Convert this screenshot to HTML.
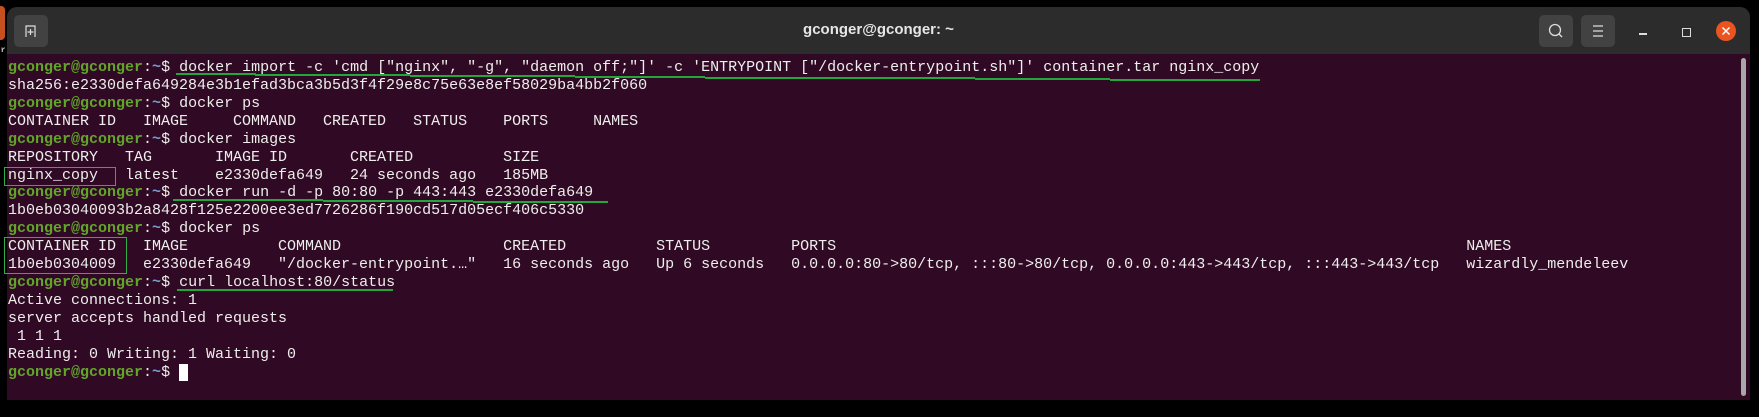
<!DOCTYPE html>
<html><head><meta charset="utf-8"><style>
html,body{margin:0;padding:0;background:#000;width:1759px;height:417px;overflow:hidden;position:relative}
.win{position:absolute;left:7px;top:7px;width:1743px;height:393px;background:#300a24;border-radius:10px 10px 0 0;overflow:hidden}
.tb{position:absolute;left:0;top:0;width:100%;height:47px;background:#2c2c2c}
.title{position:absolute;left:0;width:100%;top:14px;text-align:center;font:bold 15px "Liberation Sans",sans-serif;color:#e6e6e6}
.btn{position:absolute;top:8px;width:34px;height:32px;background:#424242;border-radius:5px}
pre{position:absolute;left:8px;top:59px;margin:0;font:15px/17.92px "Liberation Mono",monospace;color:#eeeeec;white-space:pre}
.g{color:#62a52a;font-weight:bold}.b{color:#729fcf;font-weight:bold}
.u{position:absolute;height:2px;background:#22a83a}
.box{position:absolute;border:1px solid #2fae47}
</style></head><body>
<div style="position:absolute;left:0;top:6px;width:5px;height:34px;background:#c8501e;border-radius:0 4px 4px 0"></div>
<div style="position:absolute;left:0;top:44px;width:5px;height:8px;color:#ccc;font:12px 'Liberation Mono';overflow:hidden">r</div>
<div class="win">
<div class="tb">
<div class="btn" style="left:7px"><svg width="34" height="32"><path d="M12 22V11h9v11" fill="none" stroke="#ddd" stroke-width="1.2"/><path d="M16.5 14v6M13.5 17h6" stroke="#ddd" stroke-width="1.2"/></svg></div>
<div class="title">gconger@gconger: ~</div>
<div class="btn" style="left:1532px"><svg width="34" height="32"><circle cx="16" cy="15" r="5.5" fill="none" stroke="#ddd" stroke-width="1.3"/><path d="M20 19l3 3" stroke="#ddd" stroke-width="1.3"/></svg></div>
<div class="btn" style="left:1574px"><svg width="34" height="32"><path d="M12 11h10M12 16h10M12 21h10" stroke="#ddd" stroke-width="1.2"/></svg></div>
<div style="position:absolute;left:1632px;top:26px;width:8px;height:1.5px;background:#ddd"></div>
<div style="position:absolute;left:1675px;top:21px;width:7px;height:7px;border:1.3px solid #ddd"></div>
<div style="position:absolute;left:1709px;top:14px;width:20px;height:20px;border-radius:50%;background:#e95420"><svg width="20" height="20"><path d="M6.5 6.5l7 7M13.5 6.5l-7 7" stroke="#fff" stroke-width="1.5"/></svg></div>
</div>
<div style="position:absolute;left:1734px;top:51px;width:5px;height:338px;background:#a8a8a8;border-radius:3px"></div>
</div>
<pre><span class="g">gconger@gconger</span>:<span class="b">~</span>$ docker import -c 'cmd ["nginx", "-g", "daemon off;"]' -c 'ENTRYPOINT ["/docker-entrypoint.sh"]' container.tar nginx_copy
sha256:e2330defa649284e3b1efad3bca3b5d3f4f29e8c75e63e8ef58029ba4bb2f060
<span class="g">gconger@gconger</span>:<span class="b">~</span>$ docker ps
CONTAINER ID   IMAGE     COMMAND   CREATED   STATUS    PORTS     NAMES
<span class="g">gconger@gconger</span>:<span class="b">~</span>$ docker images
REPOSITORY   TAG       IMAGE ID       CREATED          SIZE
nginx_copy   latest    e2330defa649   24 seconds ago   185MB
<span class="g">gconger@gconger</span>:<span class="b">~</span>$ docker run -d -p 80:80 -p 443:443 e2330defa649
1b0eb03040093b2a8428f125e2200ee3ed7726286f190cd517d05ecf406c5330
<span class="g">gconger@gconger</span>:<span class="b">~</span>$ docker ps
CONTAINER ID   IMAGE          COMMAND                  CREATED          STATUS         PORTS                                                                      NAMES
1b0eb0304009   e2330defa649   "/docker-entrypoint.…"   16 seconds ago   Up 6 seconds   0.0.0.0:80->80/tcp, :::80->80/tcp, 0.0.0.0:443->443/tcp, :::443->443/tcp   wizardly_mendeleev
<span class="g">gconger@gconger</span>:<span class="b">~</span>$ curl localhost:80/status
Active connections: 1
server accepts handled requests
 1 1 1
Reading: 0 Writing: 1 Waiting: 0
<span class="g">gconger@gconger</span>:<span class="b">~</span>$ <span style="background:#fff">&nbsp;</span></pre>
<div class="u" style="left:176px;top:73px;width:80px"></div>
<div class="u" style="left:255px;top:74px;width:155px"></div>
<div class="u" style="left:410px;top:75px;width:165px"></div>
<div class="u" style="left:575px;top:76px;width:130px"></div>
<div class="u" style="left:705px;top:77px;width:135px"></div>
<div class="u" style="left:840px;top:77px;width:135px"></div>
<div class="u" style="left:975px;top:78px;width:135px"></div>
<div class="u" style="left:1110px;top:79px;width:150px"></div>
<div class="u" style="left:173px;top:199px;width:150px"></div>
<div class="u" style="left:323px;top:200px;width:150px"></div>
<div class="u" style="left:473px;top:201px;width:135px"></div>
<div class="u" style="left:177px;top:289px;width:216px"></div>
<div class="box" style="left:4px;top:167px;width:110px;height:17px"></div>
<div class="box" style="left:4px;top:237px;width:121px;height:35px"></div>
</body></html>
